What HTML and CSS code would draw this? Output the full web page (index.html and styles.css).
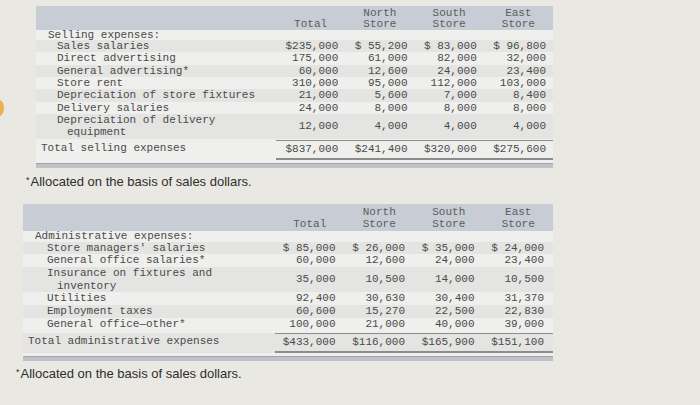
FILE: index.html
```html
<!DOCTYPE html>
<html>
<head>
<meta charset="utf-8">
<title>Expenses</title>
<link rel="stylesheet" href="styles.css">
</head>
<body>
<div class="page">
  <section class="sheet sheet-a">
    <div class="row head">
      <div></div>
      <div class="h">Total</div>
      <div class="h">North<br>Store</div>
      <div class="h">South<br>Store</div>
      <div class="h">East<br>Store</div>
    </div>
    <div class="row sub"><div class="lbl top">Selling expenses:</div></div>
    <div class="row r alt"><div class="lbl">Sales salaries</div><div class="n">$235,000</div><div class="n">$ 55,200</div><div class="n">$ 83,000</div><div class="n">$ 96,800</div></div>
    <div class="row r"><div class="lbl">Direct advertising</div><div class="n">175,000</div><div class="n">61,000</div><div class="n">82,000</div><div class="n">32,000</div></div>
    <div class="row r alt"><div class="lbl">General advertising*</div><div class="n">60,000</div><div class="n">12,600</div><div class="n">24,000</div><div class="n">23,400</div></div>
    <div class="row r"><div class="lbl">Store rent</div><div class="n">310,000</div><div class="n">95,000</div><div class="n">112,000</div><div class="n">103,000</div></div>
    <div class="row r alt"><div class="lbl">Depreciation of store fixtures</div><div class="n">21,000</div><div class="n">5,600</div><div class="n">7,000</div><div class="n">8,400</div></div>
    <div class="row r"><div class="lbl">Delivery salaries</div><div class="n">24,000</div><div class="n">8,000</div><div class="n">8,000</div><div class="n">8,000</div></div>
    <div class="row r alt"><div class="lbl">Depreciation of delivery<span class="cont">equipment</span></div><div class="n">12,000</div><div class="n">4,000</div><div class="n">4,000</div><div class="n">4,000</div></div>
    <div class="row tot"><div class="lbl">Total selling expenses</div><div class="n">$837,000</div><div class="n">$241,400</div><div class="n">$320,000</div><div class="n">$275,600</div></div>
    <div class="bar"></div>
  </section>
  <p class="note note-a"><span class="ast">*</span>Allocated on the basis of sales dollars.</p>

  <section class="sheet sheet-b">
    <div class="row head">
      <div></div>
      <div class="h">Total</div>
      <div class="h">North<br>Store</div>
      <div class="h">South<br>Store</div>
      <div class="h">East<br>Store</div>
    </div>
    <div class="row sub"><div class="lbl top">Administrative expenses:</div></div>
    <div class="row r alt"><div class="lbl">Store managers' salaries</div><div class="n">$ 85,000</div><div class="n">$ 26,000</div><div class="n">$ 35,000</div><div class="n">$ 24,000</div></div>
    <div class="row r"><div class="lbl">General office salaries*</div><div class="n">60,000</div><div class="n">12,600</div><div class="n">24,000</div><div class="n">23,400</div></div>
    <div class="row r alt"><div class="lbl">Insurance on fixtures and<span class="cont">inventory</span></div><div class="n">35,000</div><div class="n">10,500</div><div class="n">14,000</div><div class="n">10,500</div></div>
    <div class="row r"><div class="lbl">Utilities</div><div class="n">92,400</div><div class="n">30,630</div><div class="n">30,400</div><div class="n">31,370</div></div>
    <div class="row r alt"><div class="lbl">Employment taxes</div><div class="n">60,600</div><div class="n">15,270</div><div class="n">22,500</div><div class="n">22,830</div></div>
    <div class="row r last"><div class="lbl">General office—other*</div><div class="n">100,000</div><div class="n">21,000</div><div class="n">40,000</div><div class="n">39,000</div></div>
    <div class="row tot alt"><div class="lbl">Total administrative expenses</div><div class="n">$433,000</div><div class="n">$116,000</div><div class="n">$165,900</div><div class="n">$151,100</div></div>
    <div class="bar"></div>
  </section>
  <p class="note note-b"><span class="ast">*</span>Allocated on the basis of sales dollars.</p>
</div>
</body>
</html>
```

FILE: styles.css
```css
html, body {
  margin: 0;
  padding: 0;
}

body {
  background: #e9e8e3;
  font-family: "Liberation Mono", "Courier New", monospace;
  font-size: 11px;
  color: #4a4a4a;
  position: relative;
  width: 700px;
  height: 405px;
  overflow: hidden;
}

body::before {
  content: "";
  position: absolute;
  left: -6px;
  top: 100px;
  width: 10px;
  height: 16px;
  border-radius: 50%;
  background: #eeb04a;
}

.page {
  padding-top: 6px;
}

.sheet {
  background: #efefed;
}

.sheet-a {
  margin-left: 36px;
  width: 517px;
}

.sheet-b {
  margin-left: 23px;
  width: 530px;
  margin-top: 14.5px;
}

.row {
  display: grid;
  grid-template-columns: 240px repeat(4, 1fr);
}

.sheet-b .row {
  grid-template-columns: 252px repeat(4, 1fr);
}

.head {
  background: #c8ccd4;
  height: 24px;
  line-height: 11px;
  color: #5a5c61;
}

.sheet-b .head {
  height: 27px;
  line-height: 12px;
}

.h {
  text-align: center;
  align-self: end;
  padding-bottom: 0.5px;
}

.sub {
  height: 10px;
  line-height: 10px;
}

.sheet-b .sub {
  height: 11px;
  line-height: 11px;
}

.r {
  line-height: 12.33px;
}

.sheet-b .r {
  line-height: 12.67px;
}

.alt {
  background: #e4e4e2;
}

.lbl {
  padding-left: 21px;
  white-space: nowrap;
}

.sheet-b .lbl {
  padding-left: 24px;
}

.lbl.top,
.sheet-b .lbl.top {
  padding-left: 12px;
}

.cont {
  display: block;
  padding-left: 10px;
}

.n {
  text-align: right;
  padding-right: 7px;
  align-self: center;
  white-space: nowrap;
}

.sheet-b .n {
  padding-right: 9px;
}

.tot {
  margin-top: 1px;
  line-height: 17px;
}

.sheet-b .tot {
  margin-top: 3px;
}

.tot .lbl,
.sheet-b .tot .lbl {
  padding-left: 5px;
}

.tot .n {
  border-top: 1px solid #8c8c8c;
  border-bottom: 2px solid #8c8c8c;
}

.bar {
  margin-top: 3px;
  height: 4px;
  background: #bfc2c8;
  border-top: 1px solid #a0a3a8;
}

.note {
  font-family: "Liberation Sans", Arial, sans-serif;
  font-size: 13px;
  line-height: 15px;
  color: #2e2e2e;
  margin: 0;
}

.note-a {
  margin: 5.5px 0 0 26px;
}

.note-b {
  margin: 3.5px 0 0 16px;
}

.ast {
  font-size: 9px;
  vertical-align: 3px;
  margin-right: 1px;
}
```
